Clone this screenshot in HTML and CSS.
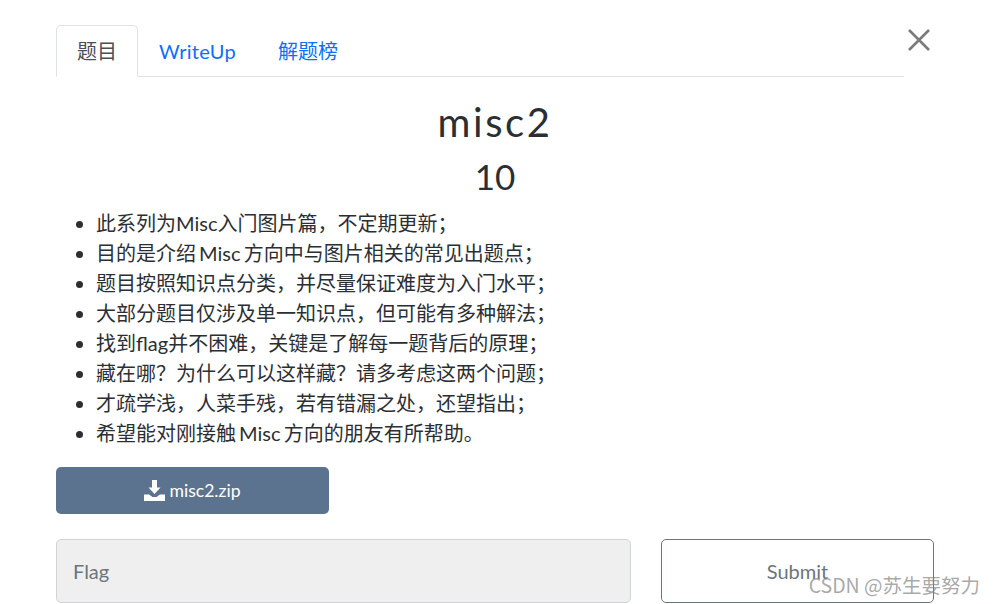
FILE: index.html
```html
<!DOCTYPE html>
<html lang="zh">
<head>
  <meta charset="UTF-8">
  <title>misc2</title>
  <link rel="stylesheet" href="styles.css">
</head>
<body>
  <div class="modal">
    <button class="close" aria-label="Close">
      <svg width="24" height="24" viewBox="0 0 24 24"><path d="M2 2 L22 22 M22 2 L2 22"/></svg>
    </button>
    <ul class="tabs">
      <li class="tab active">题目</li>
      <li class="tab tab-latin">WriteUp</li>
      <li class="tab">解题榜</li>
    </ul>
    <h1 class="title">misc2</h1>
    <h2 class="points">10</h2>
    <ul class="desc">
      <li>此系列为Misc入门图片篇，不定期更新；</li>
      <li>目的是介绍 Misc 方向中与图片相关的常见出题点；</li>
      <li>题目按照知识点分类，并尽量保证难度为入门水平；</li>
      <li>大部分题目仅涉及单一知识点，但可能有多种解法；</li>
      <li>找到flag并不困难，关键是了解每一题背后的原理；</li>
      <li>藏在哪？为什么可以这样藏？请多考虑这两个问题；</li>
      <li>才疏学浅，人菜手残，若有错漏之处，还望指出；</li>
      <li>希望能对刚接触 Misc 方向的朋友有所帮助。</li>
    </ul>
    <a class="file-btn">
      <svg width="21" height="21" viewBox="0 0 21 21"><path d="M8 0 H13 V7.500 H16.500 L10.500 14 L4.500 7.500 H8 Z M0 14.500 H5 L8.500 17 H12.500 L16 14.500 H21 V21 H0 Z"/></svg>
      <span>misc2.zip</span>
    </a>
    <div class="submit-row">
      <div class="flag-input">Flag</div>
      <button class="submit">Submit</button>
    </div>
  </div>
  <div class="watermark">CSDN @苏生要努力</div>
</body>
</html>
```

FILE: styles.css
```css
html, body {
  margin: 0;
  height: 604px;
  overflow: hidden;
}
body {
  font-family: Lato, "Noto Sans CJK SC", sans-serif;
  background: #fff;
  color: #2b2f33;
  position: relative;
}
.modal {
  position: relative;
  padding: 25px 59px 0 56px;
}
.close {
  position: absolute;
  top: 28px;
  right: 62px;
  padding: 0;
  border: none;
  background: none;
  line-height: 0;
}
.close path {
  stroke: #7b7b7b;
  stroke-width: 2.6;
  fill: none;
}
.tabs {
  display: flex;
  margin: 0 30px 0 0;
  padding: 0;
  list-style: none;
  border-bottom: 1px solid #dee2e6;
  height: 52px;
  box-sizing: border-box;
}
.tab {
  padding: 12px 20px 0;
  font-size: 20px;
  line-height: 26px;
  color: #0d6efd;
  height: 52px;
  box-sizing: border-box;
  border: 1px solid transparent;
}
.tab.active {
  color: #495057;
  background: #fff;
  border-color: #dee2e6 #dee2e6 #fff;
  border-radius: 5px 5px 0 0;
}
.tab-latin {
  letter-spacing: 0.3px;
}
.title {
  margin: 19px 0 0;
  text-align: center;
  font-weight: 400;
  font-size: 40px;
  line-height: 52px;
  letter-spacing: 2.6px;
}
.points {
  margin: 6px 0 0;
  text-align: center;
  font-weight: 400;
  font-size: 35px;
  line-height: 44px;
}
.desc {
  margin: 10px 0 0;
  padding-left: 40px;
  font-size: 20px;
  line-height: 30px;
  word-spacing: -2px;
}
.file-btn {
  display: flex;
  align-items: center;
  justify-content: center;
  gap: 4px;
  width: 273px;
  height: 47px;
  margin-top: 19px;
  border-radius: 5px;
  background: #5c7390;
  color: #fff;
  font-size: 17.6px;
}
.file-btn svg {
  fill: #fff;
}
.submit-row {
  display: flex;
  justify-content: space-between;
  margin-top: 25px;
}
.flag-input {
  display: flex;
  align-items: center;
  width: 575px;
  height: 64px;
  box-sizing: border-box;
  padding-left: 16px;
  background: #efefef;
  border: 1px solid #ced4da;
  border-radius: 5px;
  color: #6c757d;
  font-size: 20px;
}
.submit {
  width: 273px;
  height: 64px;
  box-sizing: border-box;
  padding: 0;
  background: #fff;
  border: 1px solid #6c757d;
  border-radius: 5px;
  color: #6c757d;
  font-family: inherit;
  font-size: 20px;
}
.watermark {
  position: absolute;
  top: 572px;
  right: 13px;
  font-family: "Noto Sans CJK SC", sans-serif;
  font-size: 19.5px;
  line-height: 26px;
  color: rgba(130, 130, 130, 0.7);
}
```
